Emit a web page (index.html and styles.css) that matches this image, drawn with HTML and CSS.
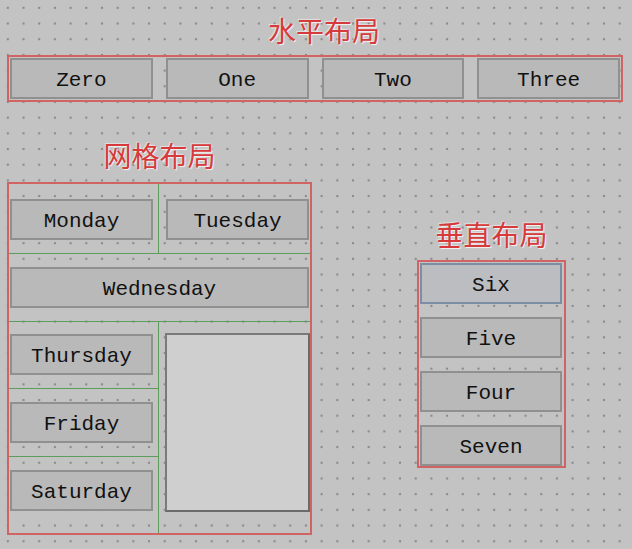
FILE: index.html
```html
<!DOCTYPE html>
<html lang="zh-CN">
<head>
  <meta charset="UTF-8">
  <meta name="viewport" content="width=device-width, initial-scale=1.0">
  <title>Layouts</title>
  <link rel="stylesheet" href="styles.css">
</head>
<body>
  <div class="form">
    <!-- horizontal layout -->
    <section class="group group-hbox">
      <h2 class="group-title">水平布局</h2>
      <div class="layout hbox">
        <button class="push">Zero</button>
        <button class="push">One</button>
        <button class="push">Two</button>
        <button class="push">Three</button>
      </div>
    </section>

    <div class="lower">
      <!-- grid layout -->
      <section class="group group-grid">
        <h2 class="group-title">网格布局</h2>
        <div class="layout grid">
          <div class="grid-row row-top">
            <div class="cell cell-left"><button class="push">Monday</button></div>
            <div class="cell cell-right"><button class="push">Tuesday</button></div>
          </div>
          <div class="grid-row row-mid">
            <button class="push">Wednesday</button>
          </div>
          <div class="grid-row row-bottom">
            <div class="col-left">
              <div class="cell cell-thu"><button class="push">Thursday</button></div>
              <div class="cell cell-fri"><button class="push">Friday</button></div>
              <div class="cell cell-sat"><button class="push">Saturday</button></div>
            </div>
            <div class="col-right">
              <div class="frame"></div>
            </div>
          </div>
        </div>
      </section>

      <!-- vertical layout -->
      <section class="group group-vbox">
        <h2 class="group-title">垂直布局</h2>
        <div class="layout vbox">
          <button class="push push-default">Six</button>
          <button class="push">Five</button>
          <button class="push">Four</button>
          <button class="push">Seven</button>
        </div>
      </section>
    </div>
  </div>
</body>
</html>
```

FILE: styles.css
```css
html, body {
  margin: 0;
  padding: 0;
}

body {
  min-height: 100vh;
  background-color: #c3c3c3;
  background-image: radial-gradient(circle, #8a8a8a 0, #8a8a8a 0.8px, transparent 1.6px);
  background-size: 15.7px 15.7px;
}

.form {
  padding: 16px 0 0 7px;
}

.group {
  display: flex;
  flex-direction: column;
  align-items: center;
  width: 616px;
}

.group-title {
  margin: 0 0 11px;
  font-family: "Noto Sans CJK SC", "Noto Sans", sans-serif;
  font-size: 28px;
  line-height: 28px;
  font-weight: 400;
  color: #d63a3a;
  text-shadow: 1px 1px 1px #f4f4f4, -1px -1px 1px rgba(255, 255, 255, 0.5);
}

.group-hbox .group-title {
  margin-left: 18px;
}

.layout {
  box-sizing: border-box;
  border: 2px solid #d06464;
}

.push {
  box-sizing: border-box;
  display: block;
  height: 41px;
  margin: 0;
  padding: 4px 0 0;
  border: 2px solid #909090;
  background-color: #b9b9b9;
  color: #111;
  font-family: "Liberation Mono", "DejaVu Sans Mono", monospace;
  font-size: 21px;
  cursor: pointer;
}

.push-default {
  border-color: #7c8ea4;
  background-color: #bcbdc1;
}

/* horizontal */
.hbox {
  width: 616px;
  display: flex;
  gap: 13px;
  padding: 1px;
}

.hbox .push {
  flex: 1;
}

/* lower row */
.lower {
  display: flex;
  align-items: flex-start;
  margin-top: 39px;
}

.group-grid {
  width: 305px;
}

.group-grid .group-title {
  margin-bottom: 13px;
}

.grid {
  width: 305px;
  height: 353px;
  display: flex;
  flex-direction: column;
}

.grid-row {
  display: flex;
  box-sizing: border-box;
}

.row-top {
  height: 70px;
  border-bottom: 1px solid #5c9c5c;
}

.row-mid {
  height: 68px;
  padding: 13px 0 0 1px;
  border-bottom: 1px solid #5c9c5c;
}

.row-mid .push {
  width: 299px;
}

.row-bottom {
  flex: 1;
}

.cell {
  box-sizing: border-box;
}

.cell .push {
  width: 143px;
}

.cell-left {
  width: 150px;
  padding: 15px 0 0 1px;
  border-right: 1px solid #5c9c5c;
}

.cell-right {
  padding: 15px 0 0 7px;
}

.col-left {
  width: 150px;
  box-sizing: border-box;
  border-right: 1px solid #5c9c5c;
  display: flex;
  flex-direction: column;
}

.col-left .cell {
  padding-left: 1px;
}

.cell-thu {
  height: 67px;
  padding-top: 12px;
  border-bottom: 1px solid #5c9c5c;
}

.cell-fri {
  height: 68px;
  padding-top: 13px;
  border-bottom: 1px solid #5c9c5c;
}

.cell-sat {
  flex: 1;
  padding-top: 13px;
}

.col-right {
  padding: 11px 0 0 6px;
}

.frame {
  box-sizing: border-box;
  width: 145px;
  height: 179px;
  background-color: #cfcfcf;
  border: 2px solid #7a7a7a;
  border-right-color: #6a6a6a;
  border-bottom-color: #6a6a6a;
}

/* vertical */
.group-vbox {
  width: 149px;
  margin: 79px 0 0 105px;
}

.group-vbox .group-title {
  margin-bottom: 12px;
}

.vbox {
  width: 149px;
  display: flex;
  flex-direction: column;
  gap: 13px;
  padding: 1px 2px 0 1px;
}
```
